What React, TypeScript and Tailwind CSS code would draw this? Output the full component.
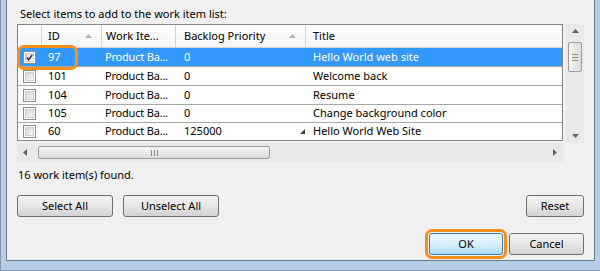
import React from "react";

type Row = {
  id: string;
  wi: string;
  bp: string;
  title: string;
  checked?: boolean;
  expander?: boolean;
  h: string;
};

const rows: Row[] = [
  { id: "97", wi: "Product Ba...", bp: "0", title: "Hello World web site", checked: true, h: "h-[19px] border-b" },
  { id: "101", wi: "Product Ba...", bp: "0", title: "Welcome back", h: "h-[19px] border-b" },
  { id: "104", wi: "Product Ba...", bp: "0", title: "Resume", h: "h-[19px] border-b" },
  { id: "105", wi: "Product Ba...", bp: "0", title: "Change background color", h: "h-[18px] border-b" },
  { id: "60", wi: "Product Ba...", bp: "125000", title: "Hello World Web Site", expander: true, h: "h-[17px]" },
];

const SortUp = () => (
  <svg width="7" height="4" viewBox="0 0 7 4" className="ml-auto mr-[9px]">
    <polygon points="0,4 3.5,0 7,4" fill="#b4b4b4" />
  </svg>
);

const CheckBox = ({ checked }: { checked?: boolean }) => (
  <div className="w-[13px] h-[13px] border border-[#8e8f8f] bg-white p-[1px]">
    <div className="w-full h-full bg-linear-to-br from-[#d4d4d4] to-[#f7f7f7] border border-[#cfcfcf] flex items-center justify-center">
      {checked && (
        <svg width="9" height="9" viewBox="0 0 9 9">
          <path d="M1 4.5 L3.5 7.5 L8 1" stroke="#1d1d7a" strokeWidth="1.8" fill="none" />
        </svg>
      )}
    </div>
  </div>
);

const Button = ({ label, w, primary }: { label: string; w: string; primary?: boolean }) => (
  <button
    className={
      primary
        ? `${w} h-[22px] rounded-[3px] border border-[#3c7fb1] bg-linear-to-b from-[#eaf6fd] via-[#d9f0fc] to-[#a9dbf6] text-black ring-[3px] ring-[#f7901e] ring-offset-1 ring-offset-[#f0f0f0]`
        : `${w} h-[22px] rounded-[3px] border border-[#707070] bg-linear-to-b from-[#f3f3f3] via-[#e6e6e6] to-[#d3d3d3] text-black`
    }
  >
    {label}
  </button>
);

export default function App() {
  return (
    <div className="w-[600px] h-[271px] flex bg-[#b7cee9] border-l border-b border-[#8897a9] pl-[5px] pr-[5px] pb-[9px] font-['Noto_Sans',sans-serif] text-[11px] text-black">
      <div className="flex-1 flex flex-col bg-[#f0f0f0] border-l border-r border-b border-[#6b7a8c] pt-[7px] px-[10px]">
        <div className="h-[14px] leading-[14px] pl-[3px]">Select items to add to the work item list:</div>

        {/* grid + vertical scroll */}
        <div className="mt-[3px] flex gap-[3px]">
          <div className="relative w-[546px] h-[117px] border border-[#828790] bg-white flex flex-col">
            {/* header */}
            <div className="h-[23px] flex border-b border-[#d5d5d5] bg-linear-to-b from-white to-[#f3f3f3]">
              <div className="w-[24px] border-r border-[#d5d5d5]" />
              <div className="w-[60px] border-r border-[#d5d5d5] flex items-center pl-[6px]">
                <span>ID</span>
                <SortUp />
              </div>
              <div className="w-[74px] border-r border-[#d5d5d5] flex items-center pl-[4px] whitespace-nowrap">Work Ite...</div>
              <div className="w-[130px] border-r border-[#d5d5d5] flex items-center pl-[8px] whitespace-nowrap">
                <span>Backlog Priority</span>
                <SortUp />
              </div>
              <div className="flex-1 flex items-center pl-[7px]">Title</div>
            </div>

            {rows.map((r) => (
              <div
                key={r.id}
                className={`${r.h} flex whitespace-nowrap border-[#a8a8a8] ${r.checked ? "bg-[#3399ff] text-white" : "bg-white"}`}
              >
                <div className="w-[24px] flex items-center pl-[5px]">
                  <CheckBox checked={r.checked} />
                </div>
                <div className="w-[60px] flex items-center pl-[6px]">{r.id}</div>
                <div className="w-[74px] flex items-center pl-[3px] tracking-[-0.2px]">{r.wi}</div>
                <div className="w-[130px] flex items-center pl-[8px]">
                  <span>{r.bp}</span>
                  {r.expander && (
                    <svg width="5" height="5" viewBox="0 0 5 5" className="ml-auto mr-[1px]">
                      <polygon points="5,0 5,5 0,5" fill="#404040" />
                    </svg>
                  )}
                </div>
                <div className="flex-1 flex items-center pl-[7px]">{r.title}</div>
              </div>
            ))}

            {/* highlight callout */}
            <div className="absolute left-[-1px] top-[20px] w-[61px] h-[25px] rounded-[7px] border-[3px] border-[#f7901e]" />
          </div>

          <div className="w-[18px] h-[119px] bg-[#e9e9e9] flex flex-col items-center">
            <svg width="7" height="4" viewBox="0 0 7 4" className="mt-[5px]">
              <polygon points="0,4 3.5,0 7,4" fill="#606060" />
            </svg>
            <div className="mt-[9px] w-[14px] h-[30px] rounded-[2px] border border-[#9c9c9c] bg-linear-to-r from-[#f4f4f4] to-[#dcdcdc] flex flex-col items-center justify-center gap-[2px]">
              <div className="w-[6px] h-[1px] bg-[#8a8a8a]" />
              <div className="w-[6px] h-[1px] bg-[#8a8a8a]" />
              <div className="w-[6px] h-[1px] bg-[#8a8a8a]" />
            </div>
            <svg width="7" height="4" viewBox="0 0 7 4" className="mt-auto mb-[5px]">
              <polygon points="0,0 7,0 3.5,4" fill="#606060" />
            </svg>
          </div>
        </div>

        {/* horizontal scroll */}
        <div className="w-[546px] h-[19px] bg-[#e9e9e9] flex items-center">
          <svg width="4" height="7" viewBox="0 0 4 7" className="ml-[6px]">
            <polygon points="4,0 4,7 0,3.5" fill="#606060" />
          </svg>
          <div className="ml-[11px] w-[232px] h-[13px] rounded-[2px] border border-[#9c9c9c] bg-linear-to-b from-[#f4f4f4] to-[#dcdcdc] flex items-center justify-center gap-[2px]">
            <div className="w-[1px] h-[6px] bg-[#8a8a8a]" />
            <div className="w-[1px] h-[6px] bg-[#8a8a8a]" />
            <div className="w-[1px] h-[6px] bg-[#8a8a8a]" />
          </div>
          <svg width="4" height="7" viewBox="0 0 4 7" className="ml-auto mr-[6px]">
            <polygon points="0,0 4,3.5 0,7" fill="#606060" />
          </svg>
        </div>

        <div className="mt-[6px] h-[14px] leading-[14px] pl-[1px]">16 work item(s) found.</div>

        <div className="mt-[13px] flex gap-[10px]">
          <Button label="Select All" w="w-[96px]" />
          <Button label="Unselect All" w="w-[96px]" />
          <div className="ml-auto">
            <Button label="Reset" w="w-[58px]" />
          </div>
        </div>

        <div className="mt-[16px] flex justify-end gap-[6px]">
          <Button label="OK" w="w-[74px]" primary />
          <Button label="Cancel" w="w-[75px]" />
        </div>
      </div>
    </div>
  );
}
